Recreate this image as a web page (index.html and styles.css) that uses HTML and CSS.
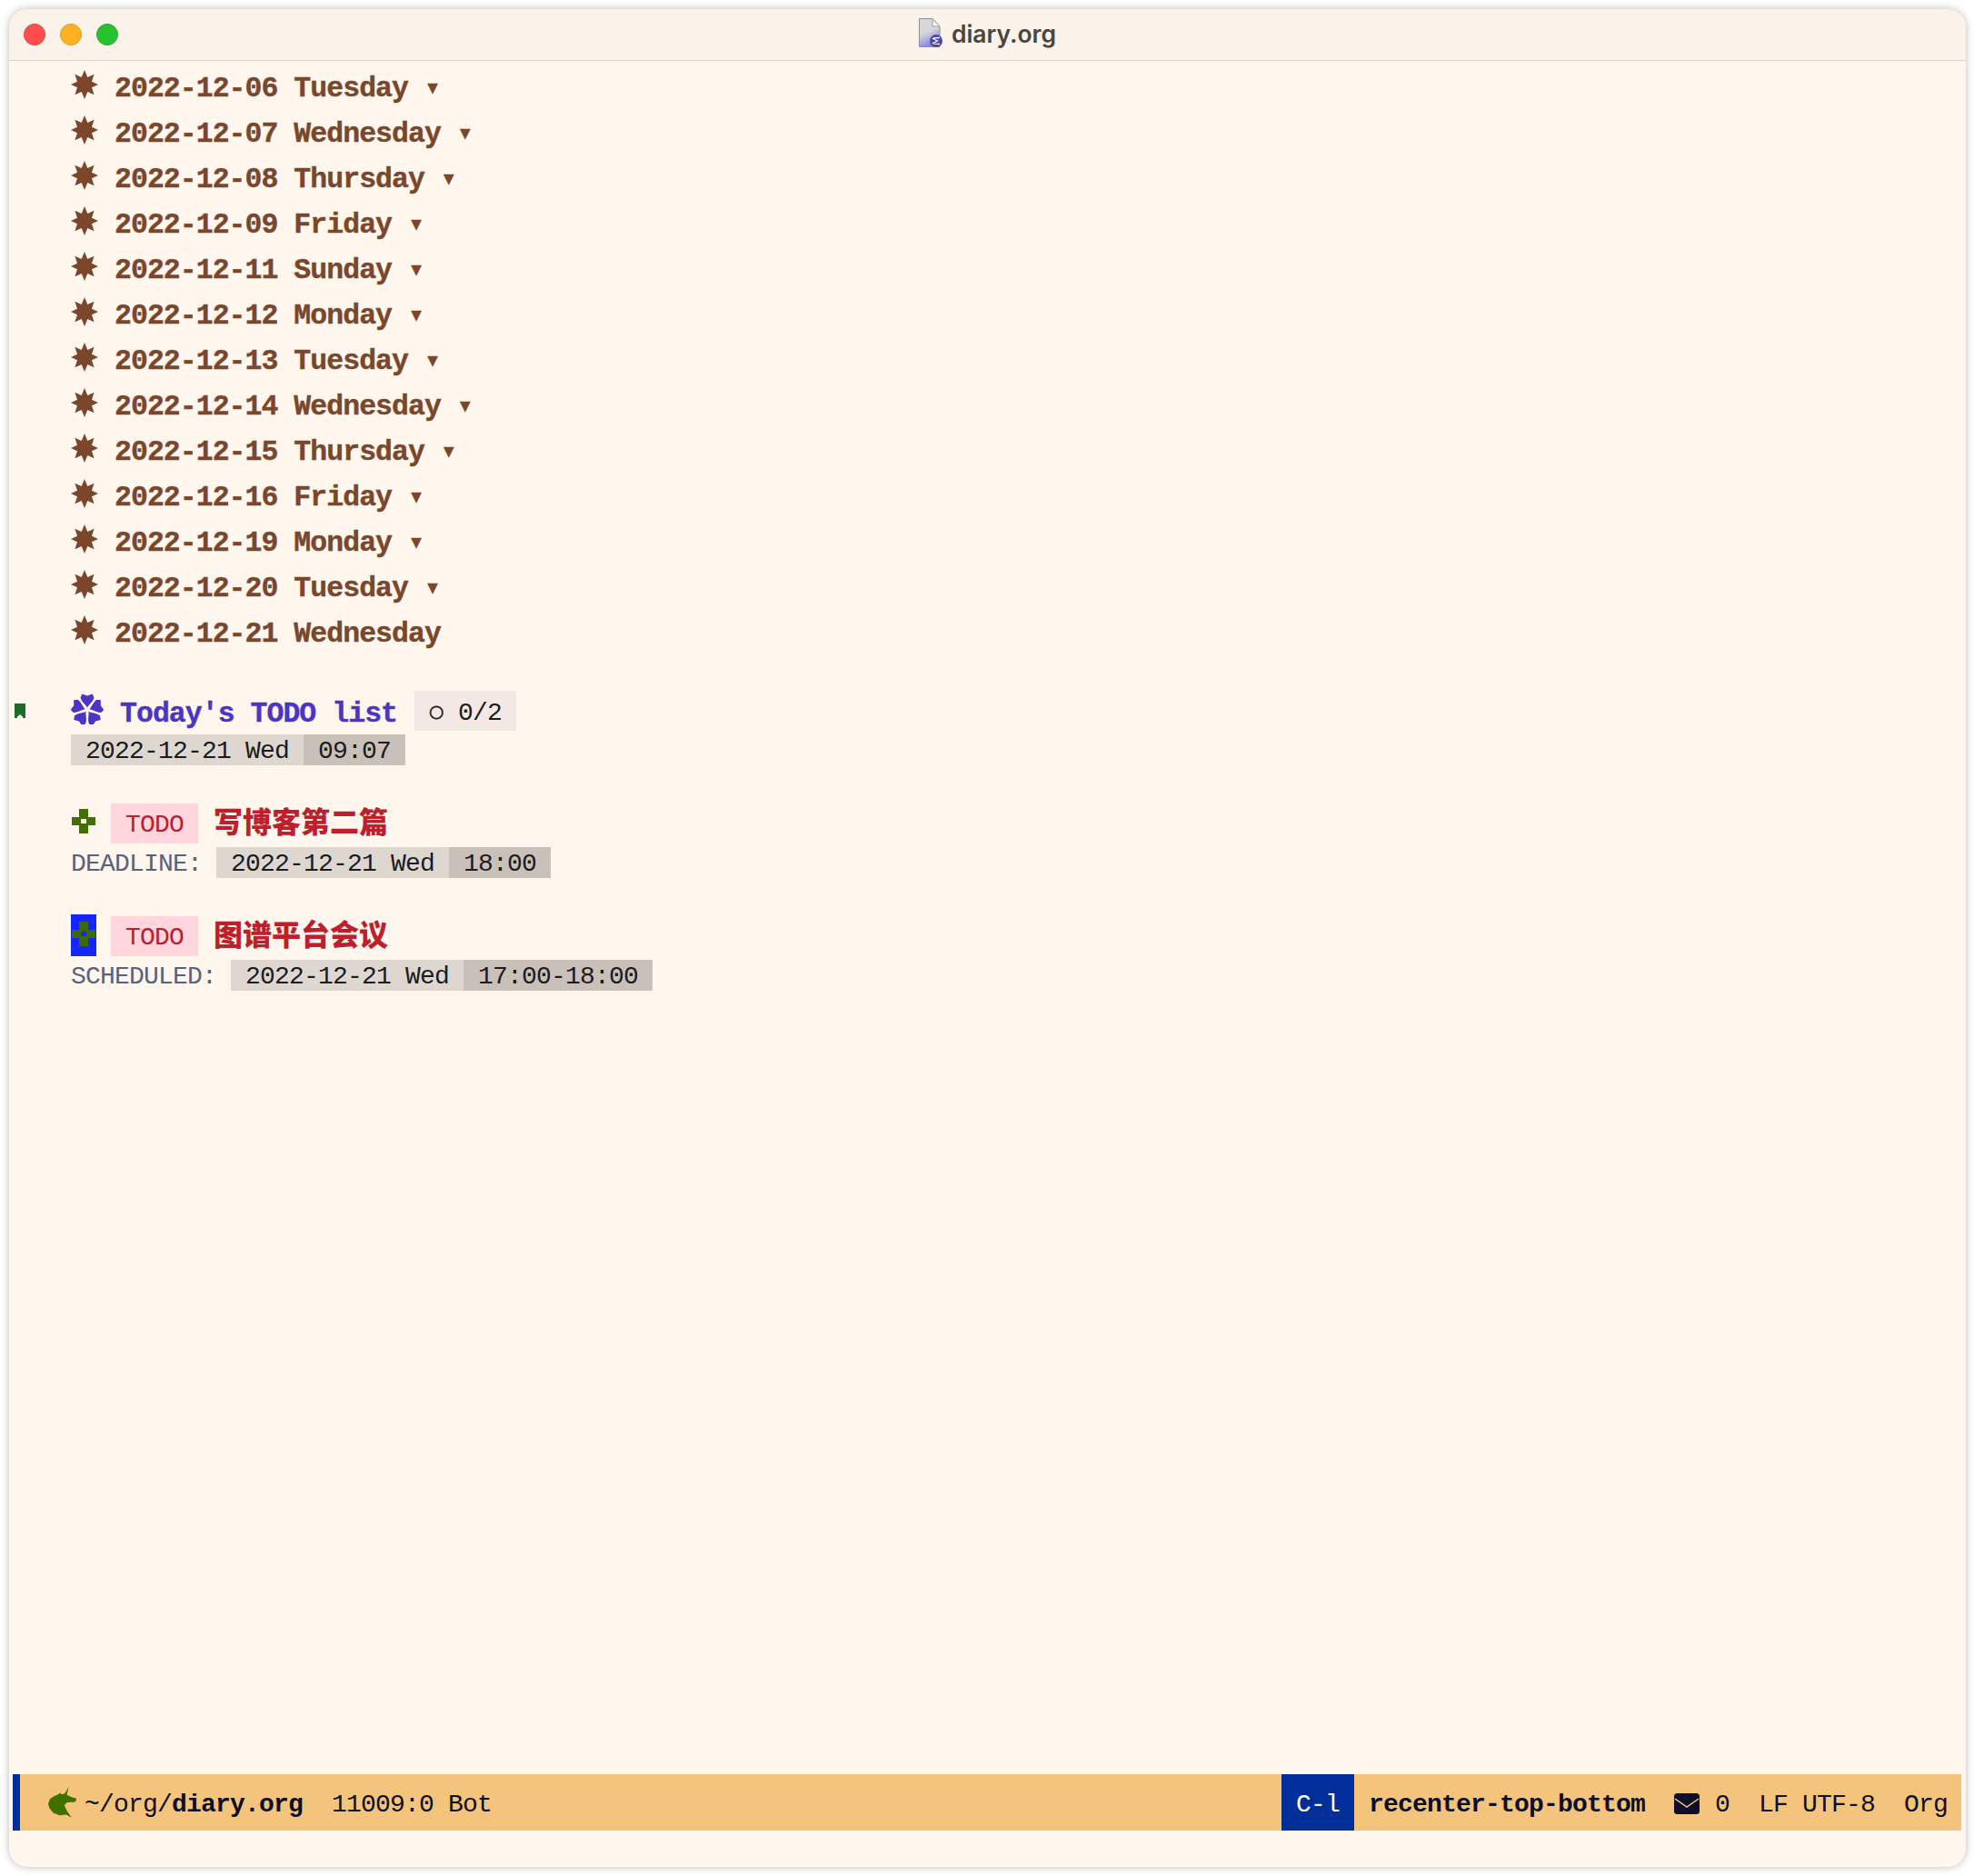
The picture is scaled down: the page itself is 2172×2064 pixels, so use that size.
FILE: index.html
```html
<!DOCTYPE html>
<html lang="en">
<head>
<meta charset="utf-8">
<title>diary.org</title>
<link rel="stylesheet" href="styles.css">
</head>
<body>
<svg class="defs" width="0" height="0" aria-hidden="true">
  <defs>
    <polygon id="star" points="15,0 18.300,8 25.600,4.800 23,12.700 30,16 23,19.300 25.600,27.200 18.300,24 15,32 11.700,24 4.400,27.200 7,19.300 0,16 7,12.700 4.400,4.800 11.700,8"/>
    <path id="cross" fill-rule="evenodd" d="M8 0H18V9H26V18H18V27H8V18H0V9H8ZM10 11V16H16V11Z"/>
    <path id="petal" d="M0-2C-.5-5-6-8-7.500-13.500L-5.500-17.500L0-15.500L5.500-17.500L7.500-13.500C6-8 .5-5 0-2Z"/>
  </defs>
</svg>
<div class="window">
  <header class="titlebar">
    <div class="lights">
      <span class="light red"></span>
      <span class="light orange"></span>
      <span class="light green"></span>
    </div>
    <div class="title">
      <svg class="file-icon" viewBox="0 0 26 32" width="26" height="32">
        <defs>
          <linearGradient id="page" x1="0" y1="0" x2="0.35" y2="1">
            <stop offset="0" stop-color="#d9d9d9"/>
            <stop offset="0.55" stop-color="#d4d4dc"/>
            <stop offset="1" stop-color="#8a84ea"/>
          </linearGradient>
        </defs>
        <path d="M0.500 0.500H15L23 9V31.500H0.500Z" fill="url(#page)" stroke="#8f8f95"/>
        <path d="M15 0.500V9H23Z" fill="#f4f4f4" stroke="#a0a0a0"/>
        <circle cx="19" cy="25" r="7" fill="#4b47a3"/>
        <path d="M23 21.500C20 21.500 17 21.500 15.500 22.500L20.500 25L15.500 27.500C17 28.500 20 28.500 23 28.500" fill="none" stroke="#f1f0fa" stroke-width="1.300"/>
      </svg>
      <span class="title-text">diary.org</span>
    </div>
  </header>

  <main class="buffer">
    <section class="outline">
      <div class="row"><svg class="star" viewBox="0 0 30 32"><use href="#star"/></svg><span class="heading">2022-12-06 Tuesday <span class="fold">▾</span></span></div>
      <div class="row"><svg class="star" viewBox="0 0 30 32"><use href="#star"/></svg><span class="heading">2022-12-07 Wednesday <span class="fold">▾</span></span></div>
      <div class="row"><svg class="star" viewBox="0 0 30 32"><use href="#star"/></svg><span class="heading">2022-12-08 Thursday <span class="fold">▾</span></span></div>
      <div class="row"><svg class="star" viewBox="0 0 30 32"><use href="#star"/></svg><span class="heading">2022-12-09 Friday <span class="fold">▾</span></span></div>
      <div class="row"><svg class="star" viewBox="0 0 30 32"><use href="#star"/></svg><span class="heading">2022-12-11 Sunday <span class="fold">▾</span></span></div>
      <div class="row"><svg class="star" viewBox="0 0 30 32"><use href="#star"/></svg><span class="heading">2022-12-12 Monday <span class="fold">▾</span></span></div>
      <div class="row"><svg class="star" viewBox="0 0 30 32"><use href="#star"/></svg><span class="heading">2022-12-13 Tuesday <span class="fold">▾</span></span></div>
      <div class="row"><svg class="star" viewBox="0 0 30 32"><use href="#star"/></svg><span class="heading">2022-12-14 Wednesday <span class="fold">▾</span></span></div>
      <div class="row"><svg class="star" viewBox="0 0 30 32"><use href="#star"/></svg><span class="heading">2022-12-15 Thursday <span class="fold">▾</span></span></div>
      <div class="row"><svg class="star" viewBox="0 0 30 32"><use href="#star"/></svg><span class="heading">2022-12-16 Friday <span class="fold">▾</span></span></div>
      <div class="row"><svg class="star" viewBox="0 0 30 32"><use href="#star"/></svg><span class="heading">2022-12-19 Monday <span class="fold">▾</span></span></div>
      <div class="row"><svg class="star" viewBox="0 0 30 32"><use href="#star"/></svg><span class="heading">2022-12-20 Tuesday <span class="fold">▾</span></span></div>
      <div class="row"><svg class="star" viewBox="0 0 30 32"><use href="#star"/></svg><span class="heading">2022-12-21 Wednesday</span></div>
    </section>

    <section class="today">
      <div class="today-head">
        <svg class="bookmark" viewBox="0 0 12 16"><polygon points="0,0 12,0 12,16 9,16 9,14 7.500,14 7.500,12.500 4.500,12.500 4.500,14 3,14 3,16 0,16"/></svg>
        <svg class="flower" viewBox="-18 -18 36 34">
          <use href="#petal"/>
          <use href="#petal" transform="rotate(72)"/>
          <use href="#petal" transform="rotate(144)"/>
          <use href="#petal" transform="rotate(216)"/>
          <use href="#petal" transform="rotate(288)"/>
        </svg>
        <span class="today-title">Today's TODO list</span>
        <span class="progress"><span class="progress-ring">○</span> 0/2</span>
      </div>
      <div class="meta"><span class="date">2022-12-21 Wed</span><span class="time">09:07</span></div>
    </section>

    <section class="task">
      <div class="task-head">
        <svg class="cross" viewBox="0 0 26 27"><use href="#cross"/></svg>
        <span class="todo">TODO</span>
        <span class="task-title">写博客第二篇</span>
      </div>
      <div class="meta"><span class="keyword">DEADLINE:</span><span class="date">2022-12-21 Wed</span><span class="time">18:00</span></div>
    </section>

    <section class="task">
      <div class="task-head">
        <span class="cursor"><svg class="cross-dark" viewBox="0 0 26 27"><use href="#cross"/></svg></span>
        <span class="todo">TODO</span>
        <span class="task-title">图谱平台会议</span>
      </div>
      <div class="meta"><span class="keyword">SCHEDULED:</span><span class="date">2022-12-21 Wed</span><span class="time">17:00-18:00</span></div>
    </section>
  </main>

  <footer class="modeline">
    <span class="stripe"></span>
    <svg class="unicorn" viewBox="38 45 94 105"><path d="M107 46L103 62L100 74L118 82L131 85L132 92L126 98L112 98L100 100L92 108L100 126L116 150L98 140L76 142L55 134L42 118L38 104L44 88L56 79L70 73L78 67L81 72L91 71L97 64Z"/></svg>
    <span class="path">~/org/<b>diary.org</b>  11009:0 Bot</span>
    <span class="key">C-l</span>
    <b class="command">recenter-top-bottom</b>
    <svg class="mail" viewBox="0 0 28 23"><rect width="28" height="23" rx="3.500"/><path d="M1 6L14 15L27 6" fill="none" stroke="#f4c47c" stroke-width="1.500"/></svg>
    <span class="status">0  LF UTF-8  Org</span>
  </footer>
</div>
</body>
</html>
```
FILE: styles.css
```css
* {
  box-sizing: border-box;
}

html,
body {
  margin: 0;
  height: 100%;
}

body {
  background: #fff;
  padding: 10px 9px 10px 10px;
  font-family: "Liberation Mono", "Noto Sans CJK SC", monospace;
  font-size: 28px;
  letter-spacing: -0.8px;
  color: #1c1c1c;
}

.defs {
  position: absolute;
}

.window {
  height: 100%;
  display: flex;
  flex-direction: column;
  background: #fff6ed;
  border-radius: 20px;
  box-shadow: 0 0 9px rgba(0, 0, 0, 0.28);
  overflow: hidden;
}

.titlebar {
  flex: none;
  height: 57px;
  display: grid;
  grid-template-columns: 1fr auto 1fr;
  align-items: center;
  padding: 0 16px;
  background: #fbf2ea;
  border-bottom: 1px solid #d9cfc5;
}

.lights {
  display: flex;
  gap: 16px;
}

.light {
  width: 24px;
  height: 24px;
  border-radius: 50%;
  border: 1px solid;
}

.red {
  background: #ff4d4d;
  border-color: #e5413f;
}

.orange {
  background: #ffb124;
  border-color: #e09a1d;
}

.green {
  background: #28c231;
  border-color: #20a92a;
}

.title {
  display: flex;
  align-items: center;
  gap: 10px;
}

.file-icon {
  margin-bottom: 4px;
}

.title-text {
  font-family: Inter, "Liberation Sans", sans-serif;
  font-weight: 600;
  font-size: 26.500px;
  letter-spacing: 0;
  margin-bottom: 2px;
  color: #4a4542;
}

.buffer {
  flex: 1;
  padding-top: 3px;
}

.outline {
  padding-left: 68px;
}

.row {
  height: 50px;
  display: flex;
  color: #7a472c;
}

.star {
  width: 30px;
  height: 32px;
  margin-top: 7px;
  margin-right: 18px;
  fill: #7a472c;
}

.heading {
  font-size: 31.500px;
  letter-spacing: -0.96px;
  font-weight: 700;
  -webkit-text-stroke: 0.4px currentColor;
  line-height: 50px;
  padding-top: 3px;
  white-space: pre;
}

.fold {
  display: inline-block;
  width: 18px;
  line-height: 1;
  text-align: center;
  font-family: "DejaVu Sans", sans-serif;
  font-size: 24px;
  font-weight: 400;
  letter-spacing: 0;
  -webkit-text-stroke: 0;
  vertical-align: 2px;
}

.today {
  margin-top: 40px;
}

.today-head {
  height: 44px;
  display: flex;
  padding-left: 6px;
}

.bookmark {
  width: 12px;
  height: 16px;
  margin-top: 14px;
  margin-right: 50px;
  fill: #1b6c2d;
}

.flower {
  width: 36px;
  height: 34px;
  margin-top: 3px;
  margin-right: 18px;
  fill: #4a35c4;
}

.today-title {
  font-size: 31.500px;
  letter-spacing: -0.96px;
  font-weight: 700;
  -webkit-text-stroke: 0.4px currentColor;
  line-height: 44px;
  padding-top: 4px;
  color: #4a35c4;
  white-space: pre;
  margin-right: 19px;
}

.progress {
  padding: 5px 16px 0;
  line-height: 39px;
  background: #f4e8e4;
  white-space: pre;
}

.progress-ring {
  display: inline-block;
  width: 16px;
  line-height: 1;
  text-align: center;
  font-family: "DejaVu Sans", sans-serif;
  font-size: 19px;
  font-weight: 700;
  letter-spacing: 0;
  -webkit-text-stroke: 0.6px currentColor;
  vertical-align: 3px;
}

.meta {
  display: flex;
  height: 34px;
  margin-top: 4px;
  padding-left: 68px;
  line-height: 34px;
  white-space: pre;
}

.keyword {
  width: 160px;
  padding-top: 2px;
  color: #56637f;
}

.task:last-child .keyword {
  width: 176px;
}

.date,
.time {
  padding: 2px 16px 0;
}

.date {
  background: #ded7cf;
}

.time {
  background: #c9c1b9;
}

.task {
  margin-top: 42px;
}

.task-head {
  height: 44px;
  display: flex;
  padding-left: 68px;
}

.cross {
  width: 26px;
  height: 27px;
  margin: 6px 1px 0 1px;
  fill: #3f7000;
}

.cursor {
  width: 28px;
  height: 46px;
  margin-top: -2px;
  padding: 8px 1px 0;
  background: #1425ff;
  display: block;
}

.cross-dark {
  display: block;
  width: 26px;
  height: 27px;
  fill: #3d6a00;
}

.todo {
  margin-left: 16px;
  padding: 4px 16px 0;
  line-height: 40px;
  background: #ffd6de;
  color: #b8202e;
}

.task-title {
  margin-left: 17px;
  font-size: 32px;
  letter-spacing: 0;
  line-height: 36px;
  font-weight: 900;
  color: #bd1f2d;
  font-family: "Noto Sans CJK SC", sans-serif;
}

.modeline {
  flex: none;
  height: 62px;
  margin: 0 5px 40px 4px;
  display: flex;
  background: #f4c47c;
  color: #0d0e28;
  line-height: 57px;
  white-space: pre;
}

.modeline > span,
.modeline > b {
  padding-top: 5px;
}

.stripe {
  width: 8px;
  background: #002f9a;
}

.unicorn {
  width: 31px;
  height: 35px;
  margin: 13px 9px 0 31px;
  fill: #3f7000;
}

.key {
  margin-left: auto;
  padding-left: 16px;
  padding-right: 16px;
  background: #002f9a;
  color: #fff;
}

.command {
  margin-left: 16px;
}

.mail {
  width: 28px;
  height: 23px;
  margin: 21px 17px 0 32px;
  fill: #0d0e28;
}

.status {
  padding-right: 15px;
}
```
